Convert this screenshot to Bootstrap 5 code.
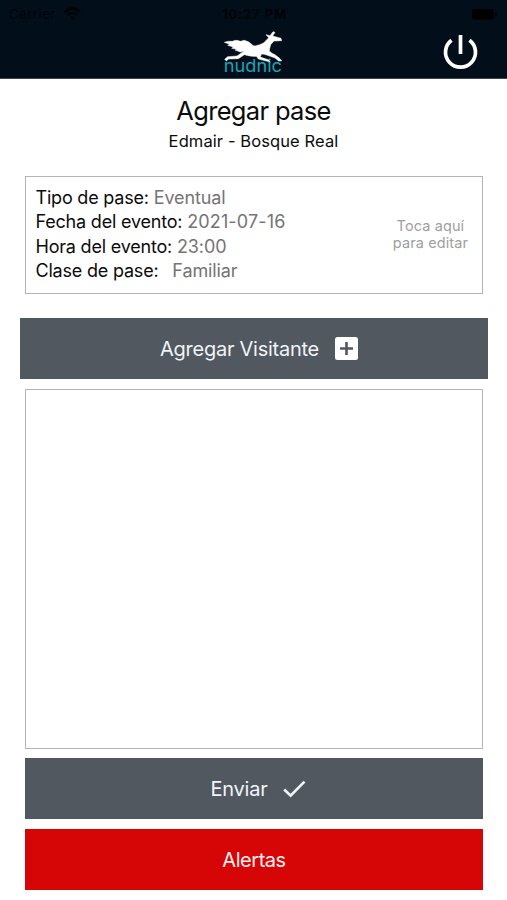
<!DOCTYPE html>
<html lang="es">
<head>
<meta charset="utf-8">
<meta name="viewport" content="width=device-width, initial-scale=1">
<title>Agregar pase</title>
<link href="https://cdn.jsdelivr.net/npm/bootstrap@5.3.0/dist/css/bootstrap.min.css" rel="stylesheet">
<style>
body{font-family:Inter,"Liberation Sans",sans-serif;color:#0b0b0b;background:#fff}
.screen{height:900px;overflow:hidden}
.topbar{height:79px;background:#020e19;border-bottom:1px solid #3d4650}
.status{height:28px;font-size:13px;line-height:28px;color:#000205;padding:0 10px 0 9px}
.status>*{flex:1 1 0}
.carrier{letter-spacing:.6px}
.clock{font-weight:600;letter-spacing:.9px;padding-left:3px}
.brand-row{height:50px;display:grid;grid-template-columns:1fr 70px 1fr;padding-right:29px;padding-left:30px}
.power{margin-top:6px;justify-self:end}
.page-title{font-size:25.5px;line-height:32px;letter-spacing:-.67px;font-weight:400;margin:16px 0 0}
.place{font-size:16.5px;line-height:22px;letter-spacing:.1px;margin-top:3px}
.panel{border:1px solid #b4b4b4;margin:0 24px 0 25px}
.info{height:118px;margin-top:24px;padding:9px 14px 0 9.500px;font-size:18px;line-height:24.4px;letter-spacing:-.2px}
.info .val{color:#747474;letter-spacing:-.1px}
.info .date{letter-spacing:.15px}
.info .kind{margin-left:9px}
.hint{color:#a0a0a0;font-size:14.5px;line-height:17px;letter-spacing:.1px;margin-top:-12px}
.action{height:61px;border-radius:0;border:0;background:#51585f;color:#f0f4f8;font-size:20px;line-height:24px;letter-spacing:-.25px;margin:0 24px 0 25px;padding:0}
.action:hover{background:#51585f;color:#f0f4f8}
.wide{margin:24px 19px 0 20px;padding-left:10px}
.send{margin-top:9px;padding:1px 0 0 9px}
.visitors{height:360px;margin-top:10px}
.alert-btn,.alert-btn:hover{background:#d60606;color:#fff0f0}
.alert-btn{margin-top:10px;letter-spacing:-.45px}
</style>
</head>
<body>
<main class="screen d-flex flex-column">
<header class="topbar flex-shrink-0">
  <div class="status d-flex align-items-center">
    <div class="d-flex align-items-center gap-2"><span class="carrier">Carrier</span>
      <svg width="17" height="14" viewBox="0 0 17 14" fill="none" stroke="currentColor" stroke-width="2.4"><path d="M1 5Q8.500-2 16 5M4 8Q8.500 4 13 8"/><path d="M6 10.200Q8.500 8 11 10.200L8.500 13Z" fill="currentColor" stroke="none"/></svg>
    </div>
    <div class="clock text-center">10:27 PM</div>
    <div class="d-flex justify-content-end"><svg width="25" height="11" viewBox="0 0 25 11"><rect width="22" height="10.500" rx="3"/><rect x="23" y="3.500" width="1.500" height="4" rx=".7"/></svg></div>
  </div>
  <div class="brand-row">
    <span></span>
    <svg width="70" height="50" viewBox="0 0 210 150" role="img" aria-label="nudnic">
      <path fill="#fff" stroke="#fff" stroke-width="1.500" stroke-linejoin="round" d="M16 43Q27 38 40 40Q52 34 64 40L76 37Q90 40 97 48Q101 54 108 54L122 50Q134 47 140 39L149 29L141 20L153 23L162 11L168 13L161 24L186 31L188 38L165 39L155 50Q151 64 151 69Q158 77 168 80L182 91L188 99L179 99L168 90L143 81Q130 77 127 79L124 87L150 96L154 103L145 100L118 93L112 85Q94 86 76 80Q66 87 58 92L29 93L22 99L17 94L26 86L54 84L76 69L64 72L48 66L54 64L38 61L43 57L26 52L32 49Z"/>
      <text x="14" y="132" textLength="175" lengthAdjust="spacingAndGlyphs" font-family="Inter,sans-serif" font-size="53" font-weight="400" fill="#1ba5b8">nudnic</text>
    </svg>
    <svg class="power" width="35" height="37" viewBox="0 0 35 37" fill="none" stroke="#fff" stroke-width="3.700"><path d="M17.500 1V20M8.500 6.200A15 15 0 1 0 26.500 6.200"/></svg>
  </div>
</header>
<h1 class="page-title text-center">Agregar pase</h1>
<div class="place text-center">Edmair - Bosque Real</div>
<section class="panel info d-flex justify-content-between flex-shrink-0">
  <div>
    <div>Tipo de pase: <span class="val">Eventual</span></div>
    <div>Fecha del evento: <span class="val date">2021-07-16</span></div>
    <div>Hora del evento: <span class="val">23:00</span></div>
    <div>Clase de pase: <span class="val kind">Familiar</span></div>
  </div>
  <div class="hint text-center align-self-center">Toca aquí<br>para editar</div>
</section>
<button class="btn action wide d-flex align-items-center justify-content-center flex-shrink-0">
  <span>Agregar Visitante</span>
  <svg class="ms-3" width="23" height="23" viewBox="0 0 23 23"><rect width="23" height="23" rx="2.500" fill="#fff"/><path d="M11.500 5V18M5 11.500H18" stroke="#51585f" stroke-width="2.600"/></svg>
</button>
<section class="panel visitors flex-shrink-0"></section>
<button class="btn action send d-flex align-items-center justify-content-center flex-shrink-0">
  <span>Enviar</span>
  <svg class="ms-3" width="23" height="18" viewBox="0 0 23 18" fill="none" stroke="#f0f4f8" stroke-width="2.700"><path d="M1.200 9.500L7.600 15.700L21.500 1.600"/></svg>
</button>
<button class="btn action alert-btn flex-shrink-0">Alertas</button>
</main>
<script src="https://cdn.jsdelivr.net/npm/bootstrap@5.3.0/dist/js/bootstrap.bundle.min.js"></script>
</body>
</html>
